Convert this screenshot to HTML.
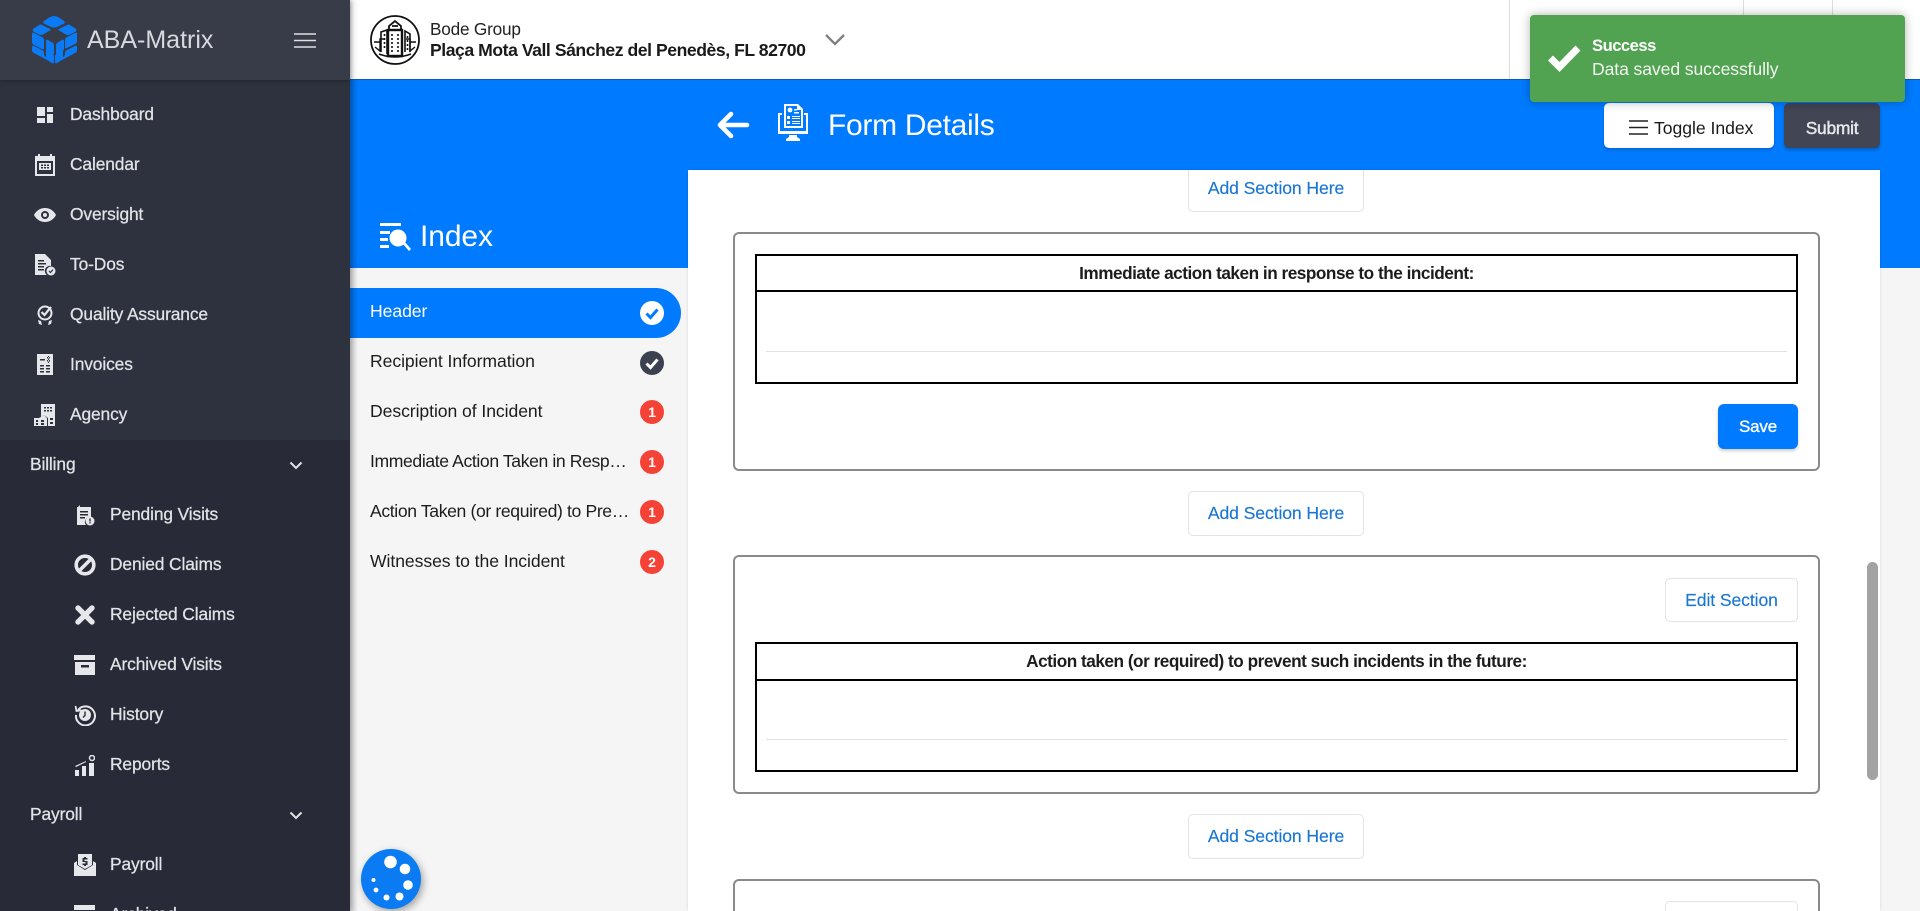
<!DOCTYPE html>
<html><head><meta charset="utf-8"><title>Form Details</title>
<style>
*{box-sizing:border-box}
html,body{margin:0;padding:0;width:1920px;height:911px;overflow:hidden;background:#f5f5f5;font-family:"Liberation Sans",Arial,sans-serif}
#w{position:relative;width:1920px;height:911px;overflow:hidden;background:#f5f5f5}
.a{position:absolute}
.t{position:absolute;white-space:nowrap;line-height:30px;height:30px}
.n{color:#e2e3e6;font-size:17.4px;letter-spacing:-.13px;-webkit-text-stroke:.25px #e2e3e6}
.i{position:absolute;fill:#e6e7ea}
.l{color:#1c1c1c;font-size:17.6px;letter-spacing:-.07px;left:370px}
.c{position:absolute;left:640px;width:24px;height:24px;border-radius:50%;background:#f44336;color:#fff;font-size:14px;font-weight:700;text-align:center;line-height:24px}
.sec{position:absolute;left:733px;width:1087px;border:2px solid #8a8a8a;border-radius:6px;background:#fff}
.tb{position:absolute;left:755px;width:1043px;border:2px solid #000;background:#fff}
.tb b{position:absolute;left:0;right:0;text-align:center;font-size:17.2px;letter-spacing:-.48px;color:#1c1c1c;line-height:30px;height:30px}
.hl{position:absolute;left:0;right:0;height:2px;background:#000}
.gl{position:absolute;height:1px;background:#e0e0e0}
.bt{position:absolute;background:#fff;border:1px solid #e3e3e3;border-radius:5px;color:#1976d2;font-size:17.6px;letter-spacing:-.1px;text-align:center;white-space:nowrap;-webkit-text-stroke:.15px #1976d2}
</style></head><body><div id="w">

<!-- main panels -->
<div class="a" style="left:350px;top:80px;width:1570px;height:188px;background:#007bff"></div>
<div class="a" style="left:350px;top:268px;width:338px;height:643px;background:#f5f5f5"></div>
<div class="a" style="left:688px;top:170px;width:1192px;height:741px;background:#fff;box-shadow:0 0 3px rgba(0,0,0,.12)"></div>

<!-- top bar -->
<div class="a" style="left:350px;top:0;width:1570px;height:80px;background:#fff;border-bottom:1px solid #0b5cad"></div>
<div class="a" style="left:1509px;top:0;width:1px;height:79px;background:#dcdcdc"></div>
<div class="a" style="left:1743px;top:0;width:1px;height:79px;background:#dcdcdc"></div>
<div class="a" style="left:1832px;top:0;width:1px;height:79px;background:#dcdcdc"></div>
<svg class="a" style="left:370px;top:15px" width="50" height="50" viewBox="0 0 50 50" fill="none" stroke="#111">
<circle cx="25" cy="25" r="24" stroke-width="1.8"/>
<path d="M4 27h6v-3h4M46 27h-6v-3h-4M5 32l5 4v-9M45 32l-5 4v-9" stroke-width="1.4"/>
<path d="M11 37V17l6-2v24M35 37V16l5 3v18" stroke-width="1.6"/>
<rect x="18" y="15" width="14" height="26" stroke-width="2.4"/>
<path d="M19 15v-4l6-5 6 5v4M22 11h6" stroke-width="1.8"/>
<path d="M22 19v19M28 19v19M14.500 19v16M37.500 21v14" stroke-width="1.6" stroke-dasharray="2 2"/>
<path d="M9 39q16 6 32 0" stroke-width="1.6"/>
</svg>
<div class="t" style="left:430px;top:14px;font-size:17.2px;letter-spacing:-.2px;color:#222">Bode Group</div>
<div class="t" style="left:430px;top:35px;font-size:17.6px;letter-spacing:-.45px;font-weight:700;color:#1a1a1a">Plaça Mota Vall Sánchez del Penedès, FL 82700</div>
<svg class="a" style="left:824px;top:33px" width="22" height="14" fill="none" stroke="#808080" stroke-width="2.300"><path d="M2 2l9 9 9-9"/></svg>

<!-- blue header contents -->
<svg class="a" style="left:717px;top:110px" width="33" height="30" fill="none" stroke="#fff" stroke-width="4.600" stroke-linecap="round" stroke-linejoin="round"><path d="M30 15H4M14 4L3 15l11 11"/></svg>
<svg class="a" style="left:777px;top:103px" width="32" height="38" viewBox="0 0 32 38" fill="#fff">
<path d="M7 1h14l5 5v19H7zM9 3v20h15V7h-4V3z" fill-rule="evenodd"/>
<circle cx="13" cy="7" r="2.400"/><path d="M17 6h3v1.500h-3zM17 9h5v1.500h-5zM10 13h3v3h-3zM15 13h8v1h-8zM15 15h8v1h-8zM10 18h3v3h-3zM15 18h8v1h-8zM15 20h8v1h-8z"/>
<path d="M1 10h4v2H3v16h26V12h-2v-2h4v21H1zM12 32h8v2l3 2v2H9v-2l3-2z" fill-rule="evenodd"/>
</svg>
<div class="t" style="left:828px;top:106px;height:40px;line-height:40px;font-size:30px;letter-spacing:-.3px;color:#fff">Form Details</div>
<svg class="a" style="left:379px;top:222px" width="32" height="30" viewBox="0 0 32 30" fill="#fff">
<path d="M1 1h21v3H1zM1 9h10v3H1zM1 16h8v3H1zM1 23h9v3H1z"/><circle cx="19" cy="16" r="8.500"/><path d="M24 22l2-2 6 7-2 2z"/>
</svg>
<div class="t" style="left:420px;top:217px;height:40px;line-height:40px;font-size:30px;letter-spacing:-.1px;color:#fff">Index</div>

<div class="a" style="left:1604px;top:103px;width:170px;height:45px;background:#fff;border-radius:5px;box-shadow:0 2px 3px rgba(0,0,0,.18)"></div>
<svg class="a" style="left:1629px;top:119px" width="19" height="17" fill="none" stroke="#222" stroke-width="1.500"><path d="M0 2h19M0 8.500h19M0 15h19"/></svg>
<div class="t" style="left:1654px;top:113px;font-size:17.6px;letter-spacing:-.03px;color:#1a1a1a">Toggle Index</div>
<div class="a" style="left:1784px;top:103px;width:96px;height:45px;background:#414554;border-radius:5px;box-shadow:0 2px 3px rgba(0,0,0,.25)"></div>
<div class="t" style="left:1784px;width:96px;top:113px;text-align:center;font-size:17.4px;letter-spacing:-.25px;color:#e8e8ea;-webkit-text-stroke:.45px #e8e8ea">Submit</div>

<!-- index list -->
<div class="a" style="left:350px;top:288px;width:331px;height:50px;background:#007bff;border-radius:0 25px 25px 0"></div>
<div class="a" style="left:350px;top:80px;width:8px;height:831px;background:linear-gradient(90deg,rgba(0,0,0,.14),rgba(0,0,0,0))"></div>
<div class="t l" style="top:296px;color:#fff">Header</div>
<div class="t l" style="top:346px">Recipient Information</div>
<div class="t l" style="top:396px">Description of Incident</div>
<div class="t l" style="top:446px;letter-spacing:-.39px">Immediate Action Taken in Resp…</div>
<div class="t l" style="top:496px;letter-spacing:-.37px">Action Taken (or required) to Pre…</div>
<div class="t l" style="top:546px">Witnesses to the Incident</div>

<svg class="a" style="left:640px;top:301px" width="24" height="24"><circle cx="12" cy="12" r="12" fill="#fff"/><path d="M6.500 12.500l4 4 7-8" fill="none" stroke="#007bff" stroke-width="3"/></svg>
<svg class="a" style="left:640px;top:351px" width="24" height="24"><circle cx="12" cy="12" r="12" fill="#3c4150"/><path d="M6.500 12.500l4 4 7-8" fill="none" stroke="#fff" stroke-width="3"/></svg>
<div class="c" style="top:400px">1</div>
<div class="c" style="top:450px">1</div>
<div class="c" style="top:500px">1</div>
<div class="c" style="top:550px">2</div>

<!-- form content -->
<div class="bt" style="left:1188px;top:170px;width:176px;height:42px;line-height:37px;border-top:0;border-radius:0 0 5px 5px">Add Section Here</div>

<div class="sec" style="top:232px;height:239px"></div>
<div class="tb" style="top:254px;height:130px"><b style="top:2px">Immediate action taken in response to the incident:</b><div class="hl" style="top:34px"></div></div>
<div class="gl" style="left:766px;top:351px;width:1021px"></div>
<div class="a" style="left:1718px;top:404px;width:80px;height:45px;background:#007bff;border-radius:6px;color:#fff;text-align:center;line-height:45px;font-size:17px;letter-spacing:-.2px;-webkit-text-stroke:.35px #fff;box-shadow:0 2px 3px rgba(0,0,0,.2)">Save</div>

<div class="bt" style="left:1188px;top:491px;width:176px;height:45px;line-height:43px">Add Section Here</div>

<div class="sec" style="top:555px;height:239px"></div>
<div class="bt" style="left:1665px;top:578px;width:133px;height:44px;line-height:42px">Edit Section</div>
<div class="tb" style="top:642px;height:130px"><b style="top:2px">Action taken (or required) to prevent such incidents in the future:</b><div class="hl" style="top:35px"></div></div>
<div class="gl" style="left:766px;top:739px;width:1021px"></div>

<div class="bt" style="left:1188px;top:814px;width:176px;height:45px;line-height:43px">Add Section Here</div>

<div class="sec" style="top:879px;height:60px"></div>
<div class="bt" style="left:1665px;top:901px;width:133px;height:44px"></div>

<div class="a" style="left:1867px;top:562px;width:11px;height:218px;background:#a3a3a3;border-radius:6px"></div>

<!-- toast -->
<div class="a" style="left:1530px;top:15px;width:375px;height:87px;background:#51a351;border-radius:4px;box-shadow:0 0 10px rgba(0,0,0,.3)"></div>
<svg class="a" style="left:1548px;top:44px" width="33" height="28" fill="none" stroke="#fff" stroke-width="7"><path d="M2.500 14l9 9L30 4"/></svg>
<div class="t" style="left:1592px;top:31px;font-size:16.600px;font-weight:700;letter-spacing:-.5px;color:#fff">Success</div>
<div class="t" style="left:1592px;top:54px;font-size:17.6px;letter-spacing:-.1px;color:#f2f7f2">Data saved successfully</div>

<!-- sidebar -->
<div class="a" style="left:0;top:0;width:350px;height:911px;background:#282b37;box-shadow:2px 0 6px rgba(0,0,0,.25)"></div>
<div class="a" style="left:0;top:80px;width:350px;height:360px;background:#2e323f"></div>
<div class="a" style="left:0;top:0;width:350px;height:80px;background:#383c49;box-shadow:0 1px 4px rgba(0,0,0,.3)"></div>

<svg class="a" style="left:32px;top:16px" width="45" height="48" viewBox="0 0 45 48" fill="#0a7bf5">
<path d="M22 0q3 0 7 3l3 2q2 2-1 3l-6 3q-3 1-6 0l-6-3q-3-1-1-3l3-2q4-3 7-3z"/>
<path d="M7 9q2-1 3 0l8 4q2 1-1 2l-5 3q-3 2-6 0l-4-2q-2-1-1-3z"/>
<path d="M38 9q-2-1-3 0l-8 4q-2 1 1 2l5 3q3 2 6 0l4-2q2-1 1-3z"/>
<path d="M0 18q0-2 2-1l8 4q2 1 2 3v8q0 2-2 1l-8-4q-2-1-2-3z"/>
<path d="M14 25q0-2 2-1l5 3q1 1 1 3v7q0 2-2 1l-5-3q-1-1-1-3z"/>
<path d="M24 30q0-2 1-3l5-3q2-1 2 1v7q0 2-1 3l-5 3q-2 1-2-1z"/>
<path d="M33 24q0-2 2-3l8-4q2-1 2 1v7q0 2-2 3l-8 4q-2 1-2-1z"/>
<path d="M0 31q0-2 2-1l8 4q2 1 2 3v1q0 2 2 3l5 3q2 1-1 1l-3-1-13-7q-2-1-2-3z"/>
<path d="M45 31q0-2-2-1l-8 4q-2 1-2 3v1q0 2-2 3l-5 3q-2 1 1 1l3-1 13-7q2-1 2-3z"/>
<path d="M14 34l7 4q1 1 1 2v6q0 2-2 1l-5-3q-1-1-1-2zM31 34l-7 4q-1 1-1 2v6q0 2 2 1l5-3q1-1 1-2z"/>
</svg>
<div class="t" style="left:87px;top:22px;height:36px;line-height:36px;font-size:25px;font-weight:400;letter-spacing:0;color:#d8d9dd">ABA-Matrix</div>
<svg class="a" style="left:294px;top:32px" width="22" height="17" fill="none" stroke="#dfe0e3" stroke-width="1.600"><path d="M0 2h22M0 8.500h22M0 15h22"/></svg>

<div class="t n" style="left:70px;top:99px">Dashboard</div>
<div class="t n" style="left:70px;top:149px">Calendar</div>
<div class="t n" style="left:70px;top:199px">Oversight</div>
<div class="t n" style="left:70px;top:249px">To-Dos</div>
<div class="t n" style="left:70px;top:299px">Quality Assurance</div>
<div class="t n" style="left:70px;top:349px">Invoices</div>
<div class="t n" style="left:70px;top:399px">Agency</div>
<div class="t n" style="left:30px;top:449px">Billing</div>
<div class="t n" style="left:110px;top:499px">Pending Visits</div>
<div class="t n" style="left:110px;top:549px">Denied Claims</div>
<div class="t n" style="left:110px;top:599px">Rejected Claims</div>
<div class="t n" style="left:110px;top:649px">Archived Visits</div>
<div class="t n" style="left:110px;top:699px">History</div>
<div class="t n" style="left:110px;top:749px">Reports</div>
<div class="t n" style="left:30px;top:799px">Payroll</div>
<div class="t n" style="left:110px;top:849px">Payroll</div>
<div class="t n" style="left:110px;top:899px">Archived</div>

<svg class="i" style="left:37px;top:107px" width="16" height="16"><path d="M0 0h8v9H0zM10 0h6v5h-6zM10 7h6v9h-6zM0 11h8v5H0z"/></svg>
<svg class="i" style="left:35px;top:154px" width="20" height="22"><path fill-rule="evenodd" d="M3 0h2v2h10V0h2v2h3v20H0V2h3zM2 7v13h16V7zM4 9h12v7H4zM6 10.500v1.500h2v-1.500zM9 10.500v1.500h2v-1.500zM12 10.500v1.500h2v-1.500zM6 13v1.500h2V13zM9 13v1.500h2V13zM12 13v1.500h2V13z"/></svg>
<svg class="i" style="left:34px;top:208px" width="22" height="14"><path fill-rule="evenodd" d="M11 0c5 0 9 3 11 7-2 4-6 7-11 7S2 11 0 7c2-4 6-7 11-7zm0 3a4 4 0 100 8 4 4 0 000-8zm0 2a2 2 0 110 4 2 2 0 010-4z"/></svg>
<svg class="i" style="left:35px;top:254px" width="21" height="22"><path fill-rule="evenodd" d="M0 0h10l6 6v6a5 5 0 00-4 9H0zM3 6v1.500h6V6zM3 9v1.500h8V9zM3 12v1.500h6V12zM3 15v1.500h6V15z"/><circle cx="16" cy="17" r="4.500"/><path d="M14 17l1.500 1.500 2.500-3" fill="none" stroke="#2e323f" stroke-width="1.200"/></svg>
<svg class="i" style="left:37px;top:305px" width="16" height="21"><circle cx="8" cy="8" r="6.500" fill="none" stroke="#e6e7ea" stroke-width="2"/><path d="M4.500 7l3 3L14 2" fill="none" stroke="#e6e7ea" stroke-width="2.200"/><path d="M1 15l3 1 1 4-3-1zM15 15l-3 1-1 4 3-1z"/></svg>
<svg class="i" style="left:37px;top:354px" width="16" height="21"><path fill-rule="evenodd" d="M0 0h16v21H0zM3 5v1.500h5V5zM3 11v1.500h4V11zM9 11v1.500h4V11zM3 14v1.500h4V14zM9 14v1.500h4V14zM3 17v1.500h4V17zM9 17v1.500h4V17zM10 3v1.500h3V3zM10 6v1.500h3V6zM11 2v7h1V2z"/></svg>
<svg class="i" style="left:34px;top:404px" width="22" height="22"><path fill-rule="evenodd" d="M7 0h14v22H14v-8l-4-3-3 2zM10 3v1.500h2V3zM13 3v1.500h2V3zM16 3v1.500h2V3zM10 6v1.500h2V6zM13 6v1.500h2V6zM16 6v1.500h2V6zM16 14v2h3v-2zM16 18v2h3v-2z"/><path fill-rule="evenodd" d="M0 14h5l5-3 3 3v8H0zM2 16v2h2v-2zM2 19v2h2v-2zM7 16v2h3v-2zM7 19v2h3v-2z"/></svg>
<svg class="a" style="left:289px;top:461px" width="14" height="9" fill="none" stroke="#e2e3e6" stroke-width="2"><path d="M1.500 1.500L7 7l5.500-5.500"/></svg>
<svg class="a" style="left:289px;top:811px" width="14" height="9" fill="none" stroke="#e2e3e6" stroke-width="2"><path d="M1.500 1.500L7 7l5.500-5.500"/></svg>

<svg class="i" style="left:75px;top:504px" width="20" height="22"><path fill-rule="evenodd" d="M3 3l2-2v2h11v10a5 5 0 00-5 8H2V3zM5 7v1.500h8V7zM5 10v1.500h8V10zM5 13v1.500h5V13z"/><circle cx="15" cy="17" r="4.500"/><path d="M14.300 14.500h1.400v3h-1.400zM14.300 18.300h1.400v1.200h-1.400z" fill="#282b37"/></svg>
<svg class="a" style="left:74px;top:554px" width="22" height="22" fill="none" stroke="#e6e7ea" stroke-width="3.600"><circle cx="11" cy="11" r="8.800"/><path d="M5 17L17 5"/></svg>
<svg class="a" style="left:75px;top:605px" width="20" height="20" fill="none" stroke="#e6e7ea" stroke-width="5.400" stroke-linecap="round"><path d="M3 3l14 14M17 3L3 17"/></svg>
<svg class="i" style="left:74px;top:655px" width="22" height="20"><path fill-rule="evenodd" d="M0 0h21v5H0zM1 7h20v13H1zM7 10v2.500h8V10z"/></svg>
<svg class="a" style="left:74px;top:704px" width="22" height="22" viewBox="0 0 22 22" fill="none" stroke="#e6e7ea"><path d="M4 6a9.500 9.500 0 11-2 5" stroke-width="2"/><path d="M1.500 2l1 5 5-.8" stroke-width="1.800"/><circle cx="11" cy="11" r="6" fill="#e6e7ea" stroke="none"/><path d="M11 7.500V11.500l-2 2" stroke="#282b37" stroke-width="1.400"/></svg>
<svg class="i" style="left:75px;top:755px" width="20" height="21"><path d="M0 15h4v6H0zM7 11h4v10H7zM14 8h5v13h-5zM0 11l11-5v1L1 12z"/><circle cx="17" cy="3" r="2.500" fill="none" stroke="#e6e7ea" stroke-width="1.500"/></svg>
<svg class="i" style="left:74px;top:854px" width="22" height="22"><path fill-rule="evenodd" d="M4 0h14v11l-7 4-7-4zM10 3v1h-1.500v4h3v1.500H8.500V11H10v1h2v-1h1.500V7h-3V5.500h3V4H12V3z"/><path d="M0 9l3-2v4l8 5 8-5V7l3 2v13H0z"/></svg>
<svg class="i" style="left:74px;top:905px" width="22" height="20"><path d="M0 0h21v5H0zM1 7h20v13H1z"/></svg>

<!-- FAB -->
<div class="a" style="left:361px;top:849px;width:60px;height:60px;border-radius:50%;background:#0a7bf2;box-shadow:2px 3px 8px rgba(0,0,0,.35)"></div>
<svg class="a" style="left:361px;top:849px" width="60" height="60" fill="#fff"><circle cx="29.500" cy="13" r="6.300"/><circle cx="44" cy="20" r="5.300"/><circle cx="47" cy="36" r="4.800"/><circle cx="38.500" cy="47.500" r="4"/><circle cx="25.500" cy="48.500" r="3"/><circle cx="15" cy="41" r="2.400"/><circle cx="12.500" cy="31" r="2"/></svg>

</div></body></html>
